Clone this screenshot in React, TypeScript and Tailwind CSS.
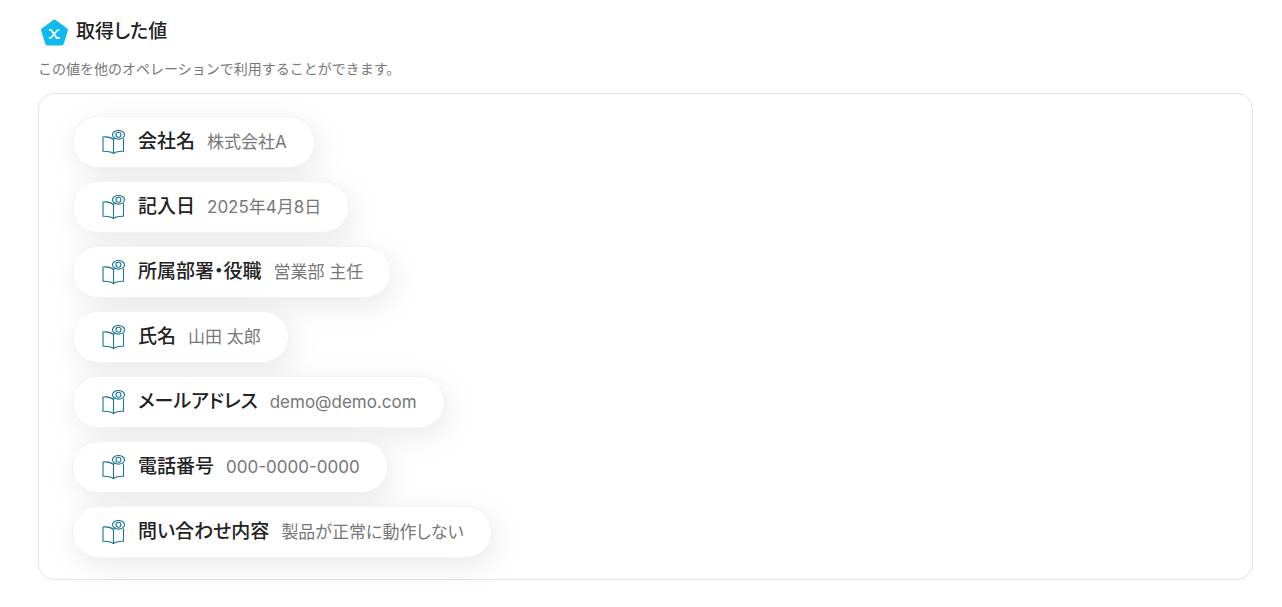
interface CapturedValue {
    label: string;
    value: string;
}

const capturedValues: CapturedValue[] = [
    { label: "会社名", value: "株式会社A" },
    { label: "記入日", value: "2025年4月8日" },
    { label: "所属部署・役職", value: "営業部 主任" },
    { label: "氏名", value: "山田 太郎" },
    { label: "メールアドレス", value: "demo@demo.com" },
    { label: "電話番号", value: "000-0000-0000" },
    { label: "問い合わせ内容", value: "製品が正常に動作しない" },
];

const VariableIcon = () => (
    <svg className="w-8 h-8 shrink-0" viewBox="0 0 32 32" fill="none" aria-hidden="true">
        <path
            d="M16.5 5.5 28 14 23.8 27.5H9.2L5 14Z"
            fill="#10baef"
            stroke="#10baef"
            strokeWidth="4"
            strokeLinejoin="round"
        />
        <path
            d="M12 14H13.2L18.8 22H21"
            stroke="#fff"
            strokeWidth="2"
            strokeLinecap="round"
            strokeLinejoin="round"
        />
        <path
            d="M21 14.2Q19.800 13.700 19 14.700L13.400 21.300Q12.600 22.300 11.500 21.800"
            stroke="#fff"
            strokeWidth="1.5"
            strokeLinecap="round"
            strokeLinejoin="round"
        />
    </svg>
);

const BookEyeIcon = () => (
    <svg
        className="w-6 h-6 shrink-0"
        viewBox="0 0 24 24"
        fill="none"
        stroke="#1b7690"
        strokeWidth="1.1"
        strokeLinejoin="round"
        aria-hidden="true"
    >
        <path d="M11.5 9.5C9 7.3 5 6.5 1 7v14.3c4-.1 7.8.4 10.5 2.2 2.5-1.8 6-2.3 10-2.2V8.5" />
        <path d="M11.5 23.5V9.5q.9-1.4 2-2" />
        <ellipse cx="16.500" cy="4.800" rx="6" ry="4.300" />
        <circle cx="16.500" cy="4.800" r="2.500" />
    </svg>
);

const ValuePill: React.FC<CapturedValue> = ({ label, value }) => {
    return (
        <li className="
            flex
            items-center
            min-h-[52px]
            pl-[29px]
            pr-[27px]
            rounded-full
            border
            border-[#f3f3f3]
            bg-white
            shadow-[4px_8px_32px_rgba(0,0,0,0.09)]"
        >
            <BookEyeIcon />
            <span className="ml-3 text-[19px] leading-7 font-medium text-[#222]">{label}</span>
            <span className="ml-3 text-[17px] leading-6 text-[#777]">{value}</span>
        </li>
    );
};

const App = () => {
    return (
        <main className="
            pl-[38px]
            pr-[29px]
            pt-4
            pb-7
            bg-white
            font-['Inter','Noto_Sans_CJK_JP',sans-serif]"
            lang="ja"
        >
            <div className="flex items-center gap-x-1.5">
                <VariableIcon />
                <h1 className="text-[19px] leading-8 font-medium text-[#222] [font-feature-settings:'palt']">
                    取得した値
                </h1>
            </div>
            <p className="mt-[9px] text-sm leading-6 text-[#777]">
                この値を他のオペレーションで利用することができます。
            </p>
            <section className="mt-3 px-[33px] pt-[22px] pb-[21px] rounded-2xl border border-[#e4e4e4]">
                <ul className="flex flex-col items-start gap-y-[13px] [font-feature-settings:'palt']">
                    {capturedValues.map((item) => (
                        <ValuePill key={item.label} label={item.label} value={item.value} />
                    ))}
                </ul>
            </section>
        </main>
    );
};

export default App;
